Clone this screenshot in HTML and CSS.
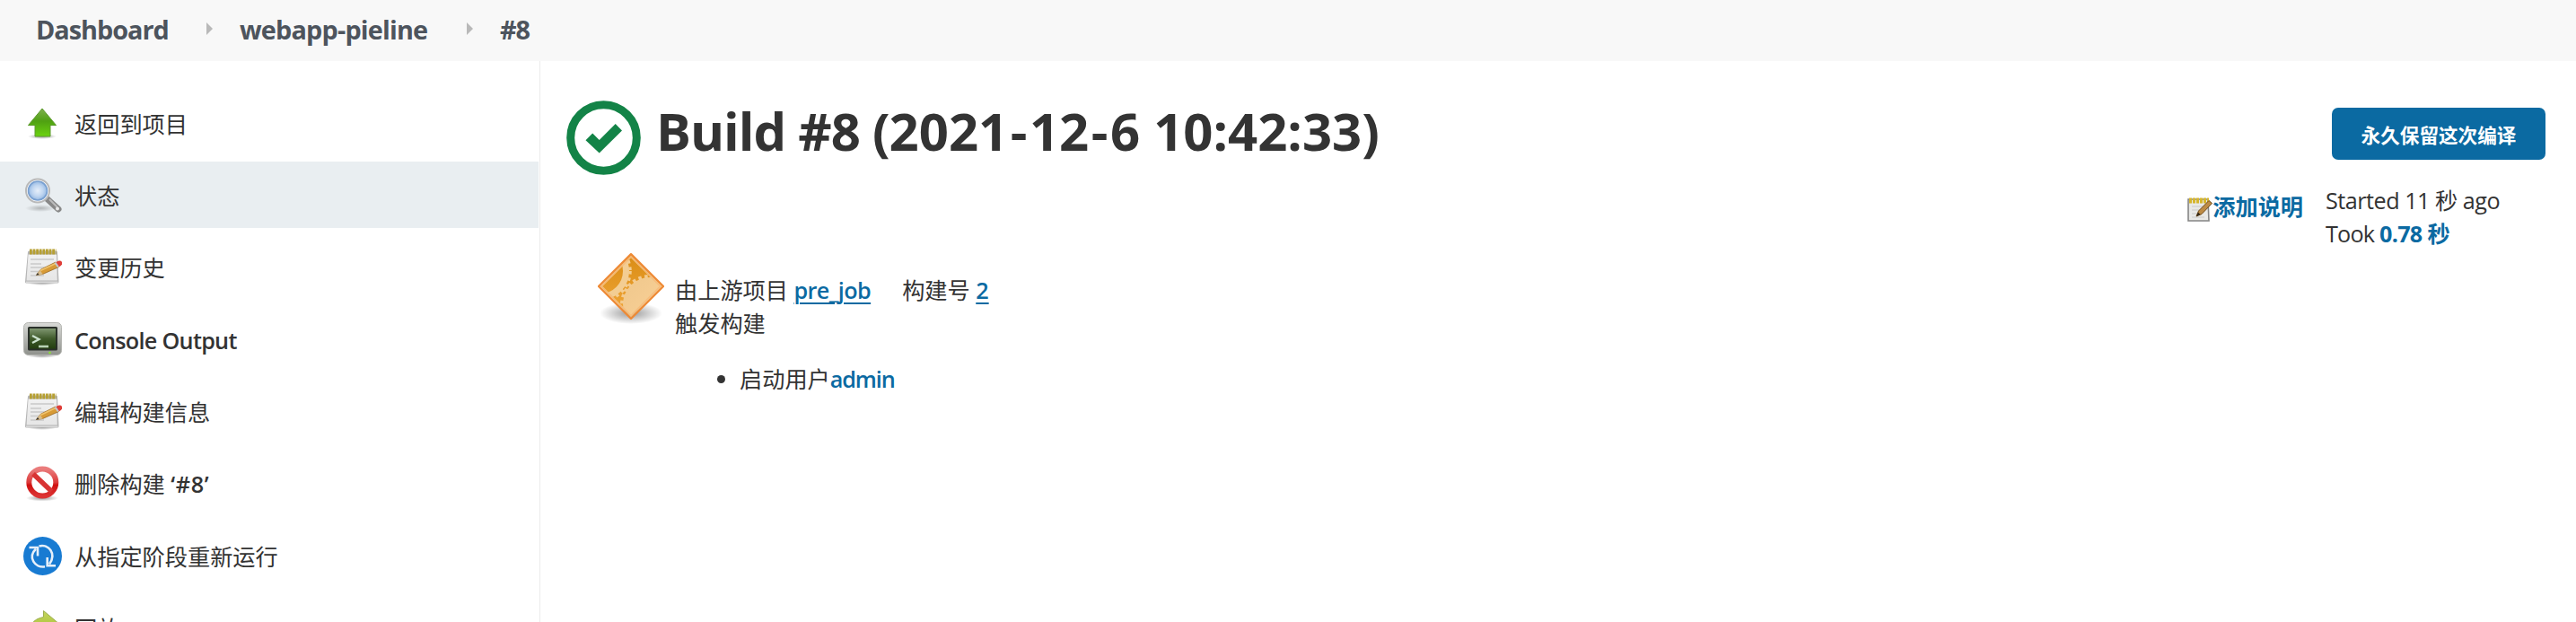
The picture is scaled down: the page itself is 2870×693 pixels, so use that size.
FILE: index.html
```html
<!DOCTYPE html>
<html lang="zh-CN">
<head>
  <meta charset="UTF-8">
  <title>webapp-pieline #8 [Jenkins]</title>
  <link rel="stylesheet" href="styles.css">
</head>
<body>

  <!-- Shared icon artwork -->
  <svg class="defs" width="0" height="0">
    <defs>
      <linearGradient id="green" x1="0" y1="0" x2="0" y2="1"><stop offset="0" stop-color="#7fb04e"/><stop offset=".45" stop-color="#4fa012"/><stop offset="1" stop-color="#6bd30f"/></linearGradient>
      <linearGradient id="lime" x1="0" y1="0" x2="0" y2="1"><stop offset="0" stop-color="#c3d45c"/><stop offset="1" stop-color="#a2bd2c"/></linearGradient>
      <linearGradient id="red" x1="0" y1="0" x2="0" y2="1"><stop offset="0" stop-color="#ea7c7c"/><stop offset=".5" stop-color="#dc3a3a"/><stop offset=".6" stop-color="#d01010"/><stop offset="1" stop-color="#dc3434"/></linearGradient>
      <linearGradient id="screen" x1="0" y1="0" x2="0" y2="1"><stop offset="0" stop-color="#7f9670"/><stop offset=".5" stop-color="#3f5a2b"/><stop offset="1" stop-color="#233f10"/></linearGradient>
      <linearGradient id="metal" x1="0" y1="0" x2="0" y2="1"><stop offset="0" stop-color="#d9dad7"/><stop offset="1" stop-color="#8f918c"/></linearGradient>
      <linearGradient id="paper" x1="0" y1="0" x2="0" y2="1"><stop offset="0" stop-color="#f1f1f1"/><stop offset="1" stop-color="#e6e6e6"/></linearGradient>
      <radialGradient id="lens"><stop offset="0" stop-color="#e6effa"/><stop offset=".6" stop-color="#bfd5f0"/><stop offset="1" stop-color="#94b8e2"/></radialGradient>
      <linearGradient id="gearDark" x1="0" y1="0" x2="0" y2="1"><stop offset="0" stop-color="#d98c14"/><stop offset="1" stop-color="#f2a83c"/></linearGradient>
      <linearGradient id="gearLight" x1="0" y1="0" x2="1" y2="1"><stop offset="0" stop-color="#efc78c"/><stop offset="1" stop-color="#fdd49a"/></linearGradient>
      <radialGradient id="shadow"><stop offset="0" stop-color="#000" stop-opacity=".4"/><stop offset="1" stop-color="#000" stop-opacity="0"/></radialGradient>
      <clipPath id="diamond"><path d="M37 3 71 37 37 71 3 37z"/></clipPath>
    </defs>

    <symbol id="notepad" viewBox="0 0 43 43">
      <ellipse cx="21" cy="39" rx="17" ry="3" fill="url(#shadow)"/>
      <path d="M5 5q0-1.500 1.500-1.500h30q1.500 0 1.500 1.500l1.500 33q0 1.500-1.500 1.500H3.500Q2 39.500 2 38z" fill="#b5b5b5"/>
      <path d="M5.500 7.500h31.500l.8 29H3.500z" fill="url(#paper)"/>
      <path d="M3 37.500h35.500v1.500H3z" fill="#dadada"/>
      <path d="M8 13h26M8 18h12M8 22h20M8 26.500h12M8 31h15" stroke="#c9c9c9" stroke-width="1.700"/>
      <path d="M7 4.500h29.500" stroke="#b7a032" stroke-width="6" stroke-dasharray="2.800 .8"/>
      <path d="M14.500 30.500 19 24.500 36 16l3.500 5.500-18 8z" fill="#d79a36" stroke="#98661e" stroke-width=".8"/>
      <path d="m19 25.500 17-8" stroke="#f0c36c" stroke-width="1.500"/>
      <path d="m14 30.700 4.500-5.700 3.200 4.500z" fill="#d8bd8d"/>
      <path d="m14 30.700 2-2.600 1.500 1.800z" fill="#333"/>
      <path d="m34.500 17 2-1 3.500 5-2 1z" fill="#c5c9ce"/>
      <path d="m36.500 16 2.500-1.300q4-.7 4.300 2.500 0 2.200-3.300 4z" fill="#df3e39"/>
    </symbol>
  </svg>

  <!-- Breadcrumbs -->
  <div class="breadcrumbs">
    <a class="crumb crumb-dashboard" href="#">Dashboard</a>
    <span class="crumb-arrow"></span>
    <a class="crumb crumb-job" href="#">webapp-pieline</a>
    <span class="crumb-arrow"></span>
    <a class="crumb crumb-build" href="#">#8</a>
  </div>

  <div class="page-body">
    <!-- Side panel -->
    <div class="side-panel">
      <a class="task" href="#">
        <svg class="task-icon" viewBox="0 0 43 43">
          <ellipse cx="21" cy="36" rx="16" ry="3" fill="url(#shadow)"/>
          <path d="M21 5 36.500 23.500h-6.500V36H13V23.500H5.500z" fill="url(#green)" stroke="#5c9b2c" stroke-width="1"/>
        </svg>
        <span>返回到项目</span>
      </a>
      <a class="task task-active" href="#">
        <svg class="task-icon" viewBox="0 0 43 43">
          <ellipse cx="19" cy="36" rx="17" ry="4" fill="url(#shadow)" opacity=".6"/>
          <path d="m27 26 12 11" stroke="#888" stroke-width="7" stroke-linecap="round"/>
          <path d="m29 26 9 9" stroke="#bcbcbc" stroke-width="2"/>
          <circle cx="38" cy="36.500" r="2" fill="#e8e8e8"/>
          <circle cx="16" cy="16.500" r="13" fill="#fff" stroke="#b9b9b9" stroke-width="2"/>
          <circle cx="16" cy="16.500" r="10.500" fill="url(#lens)" stroke="#789fd0" stroke-width="1.600"/>
        </svg>
        <span>状态</span>
      </a>
      <a class="task" href="#">
        <svg class="task-icon"><use href="#notepad"/></svg>
        <span>变更历史</span>
      </a>
      <a class="task" href="#">
        <svg class="task-icon" viewBox="0 0 43 43">
          <ellipse cx="21" cy="39" rx="18" ry="3" fill="url(#shadow)"/>
          <rect x=".5" y="2.500" width="42" height="36" rx="5" fill="url(#metal)" stroke="#b4b5b1"/>
          <rect x="5" y="7" width="33" height="26.500" rx="1.500" fill="#2a302a"/>
          <rect x="7" y="9" width="29" height="22.500" fill="url(#screen)"/>
          <path d="m10 17 7.500 4-7.500 4" fill="none" stroke="#cbe2cd" stroke-width="2.300"/>
          <path d="M17 29h11" stroke="#b8d1b5" stroke-width="2.600"/>
          <circle cx="29.500" cy="36" r="1.300" fill="#8ae234"/>
        </svg>
        <span class="latin">Console Output</span>
      </a>
      <a class="task" href="#">
        <svg class="task-icon"><use href="#notepad"/></svg>
        <span>编辑构建信息</span>
      </a>
      <a class="task" href="#">
        <svg class="task-icon" viewBox="0 0 43 43">
          <ellipse cx="21" cy="38" rx="18" ry="3.500" fill="url(#shadow)"/>
          <circle cx="21.300" cy="20.500" r="15" fill="#fff" stroke="url(#red)" stroke-width="6"/>
          <path d="m11 11 20.500 19.500" stroke="#d83434" stroke-width="5.500"/>
        </svg>
        <span>删除构建 <span class="build-quote">‘#8’</span></span>
      </a>
      <a class="task" href="#">
        <svg class="task-icon" viewBox="0 0 43 43">
          <circle cx="21.500" cy="21.500" r="21.500" fill="#187bd2"/>
          <g fill="none" stroke="#e6f0fa" stroke-width="2.600">
            <path d="M17.500 10.500C28 7.500 37.500 19 29 30.500"/>
            <path d="M24 33.300C13 35 4.500 23 14 13.500"/>
            <path d="M6.500 12h9.500v9.500M36 32.300h-9.300V23"/>
          </g>
        </svg>
        <span>从指定阶段重新运行</span>
      </a>
      <a class="task" href="#">
        <svg class="task-icon" viewBox="0 0 43 43">
          <path d="M22.500 2.500 41 18 22.500 31v-8Q12 23 8 32 4 13 22.500 9.500z" fill="url(#lime)" stroke="#9cae4e"/>
        </svg>
        <span>回放</span>
      </a>
    </div>

    <!-- Main panel -->
    <div class="main-panel">
      <div class="headline">
        <svg class="status-icon" viewBox="0 0 83 83">
          <circle cx="41.500" cy="41.500" r="36.800" fill="none" stroke="#138347" stroke-width="9"/>
          <path d="m21.500 44.200 7.700-7.700 7.500 7.500 18-18 7.300 7.500-25.300 25z" fill="#138347"/>
        </svg>
        <h1><span class="build-name">Build #8 (</span>2021<span class="dash">-</span>12<span class="dash">-</span>6 10:42:33)</h1>
        <button class="keep-button">永久保留这次编译</button>
      </div>

      <div class="content">
        <div class="cause">
          <svg class="cause-icon" viewBox="0 0 74 80">
            <ellipse cx="37" cy="67" rx="35" ry="12" fill="url(#shadow)"/>
            <g clip-path="url(#diamond)">
              <rect width="74" height="74" fill="url(#gearDark)"/>
              <circle cx="3" cy="20" r="28.500" fill="none" stroke="#f3cd93" stroke-width="7"/>
              <circle cx="3" cy="20" r="33" fill="none" stroke="#f3cd93" stroke-width="3.500" stroke-dasharray="3.500 4"/>
              <circle cx="58" cy="57" r="30" fill="url(#gearLight)"/>
              <circle cx="58" cy="57" r="31" fill="none" stroke="#f3cb91" stroke-width="4" stroke-dasharray="3.500 3.500"/>
            </g>
            <path d="M37 1.200 73 37 37 73 1 37z" fill="none" stroke="#ee8a35" stroke-width="2.400" stroke-linejoin="round"/>
            <path d="M37 4.500 69.500 37 37 69.500 4.500 37z" fill="none" stroke="#f7bd7c" stroke-width="1.300"/>
          </svg>
          <div class="cause-text">
            <div class="cause-line">由上游项目 <a class="job-link" href="#">pre_job</a><span class="cause-number">构建号 <a href="#">2</a></span></div>
            <div class="cause-line">触发构建</div>
            <ul>
              <li>启动用户<a class="user-link" href="#">admin</a></li>
            </ul>
          </div>
        </div>

        <a class="description-link" href="#">
          <svg class="note-icon" viewBox="0 0 28 28">
            <path d="M1 3h22l1 24H1z" fill="#e9e9e7" stroke="#858585" stroke-width="1.600"/>
            <path d="M5 11h14M5 15h9M5 19h8M5 23h14" stroke="#cacaca" stroke-width="1.200"/>
            <path d="M2 4.500h22" stroke="#d6b62d" stroke-width="6" stroke-dasharray="3 1"/>
            <path d="m10 22 2.500-6L24 4.500l3.500 3L16 19.500z" fill="#bd8b45" stroke="#704b18"/>
            <path d="m10 22 2-4.500 2.500 2.500z" fill="#2f2519"/>
          </svg>
          <span>添加说明</span>
        </a>
        <div class="timing">
          <div class="started">Started 11 秒 ago</div>
          <div class="took">Took <a href="#">0.78 秒</a></div>
        </div>
      </div>
    </div>
  </div>

</body>
</html>
```
FILE: styles.css
```css
* {
  box-sizing: border-box;
}

body {
  margin: 0;
  height: 693px;
  overflow: hidden;
  background: #fff;
  color: #333;
  font-family: "Open Sans", "Noto Sans CJK SC", sans-serif;
  font-size: 25.2px;
  line-height: 37px;
}

a {
  color: #0b6aa2;
  font-weight: 600;
  text-decoration: none;
}

.defs {
  position: absolute;
}

/* Breadcrumbs */
.breadcrumbs {
  display: flex;
  align-items: center;
  height: 68px;
  padding: 0 0 4px 40px;
  background: #f8f8f8;
}

.crumb {
  color: #4d545d;
  font-size: 28.8px;
  font-weight: 700;
  letter-spacing: -1px;
  white-space: nowrap;
}

.crumb-dashboard {
  width: 190px;
}

.crumb-job {
  width: 253px;
  letter-spacing: -0.8px;
}

.crumb-arrow {
  width: 0;
  margin-right: 30px;
  border: 7px solid transparent;
  border-left-color: #b9b9b9;
  border-right: 0;
}

/* Side panel */
.page-body {
  display: flex;
  height: 625px;
  overflow: hidden;
}

.side-panel {
  display: flex;
  flex-direction: column;
  flex: none;
  gap: 6.4px;
  width: 602px;
  padding: 32px 1px 0 0;
  border-right: 1px solid #ececec;
}

.task {
  display: flex;
  align-items: center;
  flex: none;
  gap: 14px;
  height: 74px;
  padding-left: 26px;
  color: #333;
  font-weight: 400;
}

.task > span {
  padding-top: 2px;
}

.task-active {
  background: #e9eef1;
}

.task-icon {
  flex: none;
  width: 43px;
  height: 43px;
}

.task .latin {
  font-weight: 600;
  letter-spacing: -0.7px;
}

.build-quote {
  font-weight: 600;
  letter-spacing: 0.6px;
}

/* Main panel */
.main-panel {
  flex: 1;
  padding: 44px 34px 0 29px;
}

.headline {
  display: flex;
  align-items: flex-start;
  height: 97px;
}

.status-icon {
  width: 83px;
  height: 83px;
}

h1 {
  margin: -4px 0 0 17px;
  font-size: 58px;
  line-height: 76px;
  white-space: nowrap;
}

.build-name {
  letter-spacing: -1px;
}

.dash {
  padding: 0 2.5px;
}

.keep-button {
  width: 238px;
  height: 58px;
  margin: 8px 0 0 auto;
  padding: 0;
  border: 0;
  border-radius: 7px;
  background: #0b6aa2;
  color: #fff;
  font: 700 21.6px "Noto Sans CJK SC", sans-serif;
}

.content {
  display: flex;
  align-items: flex-start;
}

.cause {
  display: flex;
  flex: 1;
  padding: 73px 0 0 35px;
}

.cause-icon {
  width: 74px;
  height: 80px;
}

.cause-text {
  padding: 23px 0 0 12px;
}

.cause-line a {
  text-decoration: underline;
  text-decoration-thickness: 2px;
  text-underline-offset: 4px;
}

.job-link {
  letter-spacing: -0.6px;
}

.user-link {
  letter-spacing: -1.1px;
}

.cause-number {
  margin-left: 35px;
}

.cause-text ul {
  margin: 25px 0 0;
  padding-left: 72px;
}

.description-link {
  display: flex;
  margin-top: 3px;
  font-weight: 700;
}

.note-icon {
  width: 28px;
  height: 28px;
  margin: 7px 0 0;
}

.timing {
  width: 245px;
  margin: -4px 0 0 25px;
  white-space: nowrap;
}

.started {
  letter-spacing: -0.5px;
}

.took {
  letter-spacing: -0.8px;
}

.timing a {
  font-weight: 700;
  letter-spacing: -0.7px;
}
```
